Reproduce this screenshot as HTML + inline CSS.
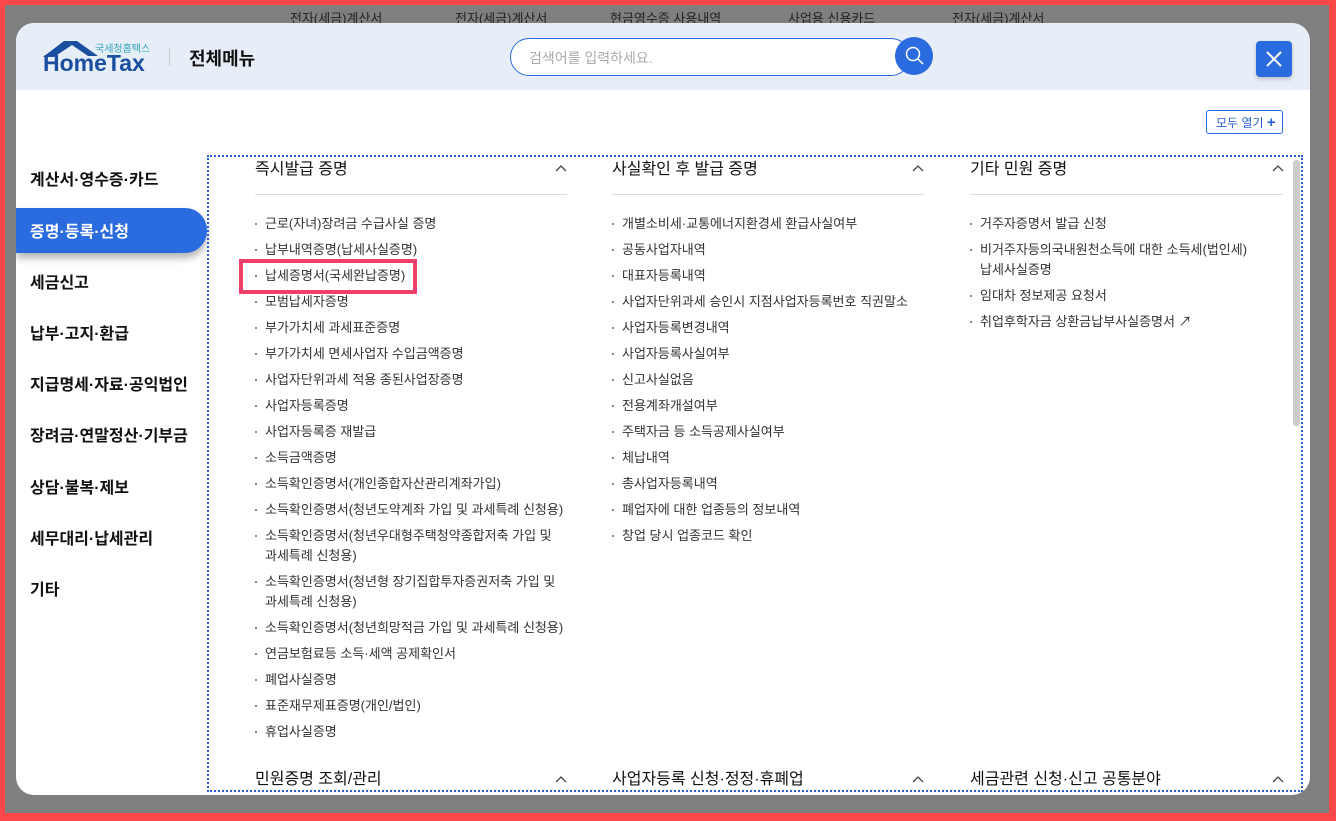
<!DOCTYPE html>
<html><head><meta charset="utf-8"><style>
*{margin:0;padding:0;box-sizing:border-box}
body{width:1336px;height:821px;overflow:hidden;background:#fb4747;font-family:"Liberation Sans","Noto Sans CJK KR",sans-serif;position:relative}
.ov{position:absolute;left:5px;top:5px;width:1324px;height:808px;background:#7f7f7f}
.bgt{position:absolute;top:8px;font-size:13px;color:#222;left:0}
.modal{position:absolute;left:16px;top:23px;width:1294px;height:772px;background:#fff;border-radius:18px;overflow:hidden}
.hd{position:absolute;left:0;top:0;width:100%;height:67px;background:#e8eef7}
.abs{position:absolute}
.nav div{position:absolute;left:14px;font-size:16px;font-weight:bold;color:#111}
.col{position:absolute;top:0;width:312px}
.col h3{position:absolute;top:137px;font-size:16px;font-weight:normal;color:#111;line-height:20px}
.chev{position:absolute;top:141px}
.col ul{position:absolute;left:0;top:191px;list-style:none;font-size:13px;color:#333;line-height:20px}
.col li{margin-bottom:6px;padding-left:10px;position:relative}
.col li:before{content:"";position:absolute;left:0;top:9px;width:2px;height:2px;background:#888}
</style></head><body>
<div class="ov"></div>
<div class="bgt" style="left:290px">전자(세금)계산서</div>
<div class="bgt" style="left:455px">전자(세금)계산서</div>
<div class="bgt" style="left:610px">현금영수증 사용내역</div>
<div class="bgt" style="left:788px">사업용 신용카드</div>
<div class="bgt" style="left:952px">전자(세금)계산서</div>
<div class="modal">
<div class="hd"></div>
<svg class="abs" style="left:26px;top:16px" width="60" height="20"><path d="M1 18 L22 2 L35 2 L56 17 L46 17 L30 6 L12 18 Z" fill="#1a4fa0"/></svg>
<div class="abs" style="left:79px;top:17px;font-size:10px;color:#2aa3b8">국세청홈택스</div>
<div class="abs" style="left:27px;top:27px;font-size:23px;font-weight:bold;color:#1a4fa0;letter-spacing:0px">HomeTax</div>
<div class="abs" style="left:153px;top:25px;width:1px;height:18px;background:#ccc"></div>
<div class="abs" style="left:173px;top:22px;font-size:18px;font-weight:bold;color:#111">전체메뉴</div>
<div class="abs" style="left:494px;top:15px;width:400px;height:38px;border:1.5px solid #2b6be0;border-radius:19px;background:#fff;padding:9px 18px;font-size:14px;color:#aaa">검색어를 입력하세요.</div>
<div class="abs" style="left:879px;top:14px;width:38px;height:38px;border-radius:50%;background:#2b6be0"></div>
<svg class="abs" style="left:888px;top:22px" width="22" height="22"><circle cx="9" cy="9" r="6.5" fill="none" stroke="#fff" stroke-width="1.5"/><path d="M14 14 L19 19" stroke="#fff" stroke-width="1.5"/></svg>
<div class="abs" style="left:1240px;top:18px;width:36px;height:36px;background:#2b6be0;border-radius:4px;box-shadow:0 2px 4px rgba(0,0,0,.2)"></div>
<svg class="abs" style="left:1248px;top:26px" width="20" height="20"><path d="M3 3 L17 17 M17 3 L3 17" stroke="#fff" stroke-width="2"/></svg>
<div class="abs" style="left:1190px;top:87px;width:77px;height:24px;border:1px solid #2b6be0;border-radius:3px;font-size:12px;color:#2b5fd6;padding:3px 0 0 9px">모두 열기 <b style="font-size:15px;line-height:12px">+</b></div>
<div class="nav">
<div style="top:143px">계산서·영수증·카드</div>
<div style="top:185px;left:0;width:191px;height:45px;background:#2b6be0;border-radius:0 22px 22px 0;box-shadow:0 5px 8px rgba(0,0,0,.3);color:#fff;padding:10px 0 0 14px">증명·등록·신청</div>
<div style="top:246px">세금신고</div>
<div style="top:297px">납부·고지·환급</div>
<div style="top:348px">지급명세·자료·공익법인</div>
<div style="top:399px">장려금·연말정산·기부금</div>
<div style="top:451px">상담·불복·제보</div>
<div style="top:502px">세무대리·납세관리</div>
<div style="top:553px">기타</div>
</div>
<div class="abs" style="left:191px;top:132px;width:1096px;height:637px;border:2px dotted #2b5fd6"></div>
<div class="abs" style="left:1277px;top:137px;width:7px;height:266px;background:#ccc;border-radius:3px"></div>
<div class="col" style="left:239px">
<h3>즉시발급 증명</h3><svg class="chev" style="left:300px" width="12" height="8"><path d="M1 7 L6 2 L11 7" fill="none" stroke="#444" stroke-width="1.3"/></svg>
<div class="abs" style="left:0;top:171px;width:312px;height:1px;background:#ddd"></div>
<ul>
<li>근로(자녀)장려금 수급사실 증명</li><li>납부내역증명(납세사실증명)</li><li>납세증명서(국세완납증명)</li><li>모범납세자증명</li><li>부가가치세 과세표준증명</li><li>부가가치세 면세사업자 수입금액증명</li><li>사업자단위과세 적용 종된사업장증명</li><li>사업자등록증명</li><li>사업자등록증 재발급</li><li>소득금액증명</li><li>소득확인증명서(개인종합자산관리계좌가입)</li><li>소득확인증명서(청년도약계좌 가입 및 과세특례 신청용)</li><li>소득확인증명서(청년우대형주택청약종합저축 가입 및<br>과세특례 신청용)</li><li>소득확인증명서(청년형 장기집합투자증권저축 가입 및<br>과세특례 신청용)</li><li>소득확인증명서(청년희망적금 가입 및 과세특례 신청용)</li><li>연금보험료등 소득·세액 공제확인서</li><li>폐업사실증명</li><li>표준재무제표증명(개인/법인)</li><li>휴업사실증명</li>
</ul>
<h3 style="top:747px">민원증명 조회/관리</h3><svg class="chev" style="left:300px;top:752px" width="12" height="8"><path d="M1 7 L6 2 L11 7" fill="none" stroke="#444" stroke-width="1.3"/></svg>
</div>
<div class="abs" style="left:223px;top:236px;width:178px;height:35px;border:4px solid #f0406a"></div>
<div class="col" style="left:596px">
<h3>사실확인 후 발급 증명</h3><svg class="chev" style="left:300px" width="12" height="8"><path d="M1 7 L6 2 L11 7" fill="none" stroke="#444" stroke-width="1.3"/></svg>
<div class="abs" style="left:0;top:171px;width:312px;height:1px;background:#ddd"></div>
<ul>
<li>개별소비세·교통에너지환경세 환급사실여부</li><li>공동사업자내역</li><li>대표자등록내역</li><li>사업자단위과세 승인시 지점사업자등록번호 직권말소</li><li>사업자등록변경내역</li><li>사업자등록사실여부</li><li>신고사실없음</li><li>전용계좌개설여부</li><li>주택자금 등 소득공제사실여부</li><li>체납내역</li><li>총사업자등록내역</li><li>폐업자에 대한 업종등의 정보내역</li><li>창업 당시 업종코드 확인</li>
</ul>
<h3 style="top:747px">사업자등록 신청·정정·휴폐업</h3><svg class="chev" style="left:300px;top:752px" width="12" height="8"><path d="M1 7 L6 2 L11 7" fill="none" stroke="#444" stroke-width="1.3"/></svg>
</div>
<div class="col" style="left:954px">
<h3>기타 민원 증명</h3><svg class="chev" style="left:302px" width="12" height="8"><path d="M1 7 L6 2 L11 7" fill="none" stroke="#444" stroke-width="1.3"/></svg>
<div class="abs" style="left:0;top:171px;width:313px;height:1px;background:#ddd"></div>
<ul>
<li>거주자증명서 발급 신청</li><li>비거주자등의국내원천소득에 대한 소득세(법인세)<br>납세사실증명</li><li>임대차 정보제공 요청서</li><li>취업후학자금 상환금납부사실증명서 ↗</li>
</ul>
<h3 style="top:747px">세금관련 신청·신고 공통분야</h3><svg class="chev" style="left:302px;top:752px" width="12" height="8"><path d="M1 7 L6 2 L11 7" fill="none" stroke="#444" stroke-width="1.3"/></svg>
</div>
</div>
</body></html>
